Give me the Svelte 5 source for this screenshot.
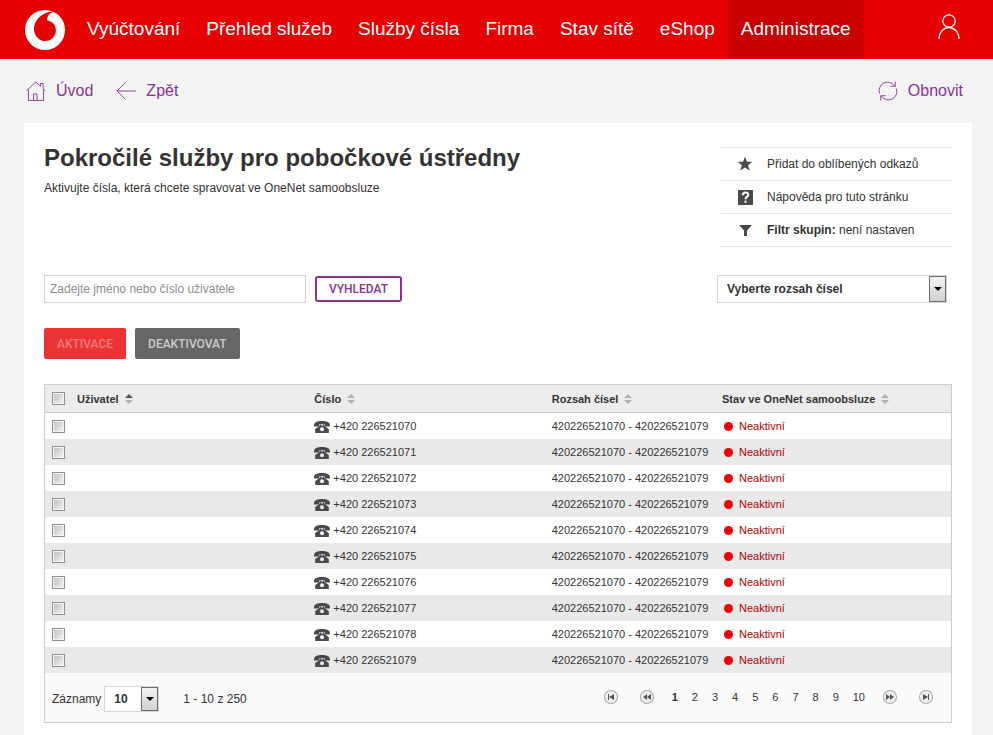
<script>
  const menu = [
    'Vyúčtování',
    'Přehled služeb',
    'Služby čísla',
    'Firma',
    'Stav sítě',
    'eShop',
    'Administrace'
  ];
  const active = 'Administrace';

  const range = '420226521070 - 420226521079';
  const pages = [1, 2, 3, 4, 5, 6, 7, 8, 9, 10];

  let search = '';
  let page = 1;
  let pageSize = '10';
  let sortBy = 'user';

  const columns = [
    { id: 'user', label: 'Uživatel' },
    { id: 'number', label: 'Číslo' },
    { id: 'range', label: 'Rozsah čísel' },
    { id: 'state', label: 'Stav ve OneNet samoobsluze' }
  ];

  let rows = Array.from({ length: 10 }, (_, i) => ({
    number: `+420 22652107${i}`,
    range,
    state: 'Neaktivní',
    checked: false
  }));

  $: allChecked = rows.every((r) => r.checked);

  function toggleAll() {
    const value = !allChecked;
    rows = rows.map((r) => ({ ...r, checked: value }));
  }
</script>

<header>
  <a class="logo" href="/" aria-label="Vodafone">
    <svg viewBox="0 0 24 24" width="40" height="40">
      <path fill="#fff" d="M12 0A12 12 0 0 0 0 12A12 12 0 0 0 12 24A12 12 0 0 0 24 12A12 12 0 0 0 12 0M16.25 1.12C16.57 1.12 16.9 1.15 17.11 1.22C14.94 1.67 13.21 3.69 13.22 6C13.22 6.05 13.22 6.11 13.23 6.17C16.87 7.06 18.5 9.25 18.5 12.28C18.54 15.31 16.14 18.64 12.09 18.65C8.82 18.66 5.41 15.86 5.39 11.37C5.38 8.4 7 5.54 9.04 3.85C11.04 2.19 13.77 1.13 16.25 1.12Z" />
    </svg>
  </a>
  <nav>
    {#each menu as item}
      <a href="/" class:active={item === active}>{item}</a>
    {/each}
  </nav>
  <button class="account" aria-label="Uživatel">
    <svg viewBox="0 0 22 26" width="22" height="26" fill="none" stroke="#fff" stroke-width="1.3">
      <circle cx="11" cy="7" r="6.2" />
      <path d="M1 25c0-6.500 4.300-11.500 10-11.500S21 18.500 21 25" />
    </svg>
  </button>
</header>

<div class="crumbs">
  <a href="/">
    <svg viewBox="0 0 20 20" width="20" height="20">
      <path d="M.7 9.800L9.700.8l4.800 4.500V2.500h2.600v5.300l2.300 2M2.500 8.500v11h15V8.500M7.500 19.500v-6.500h3.500v6.500" />
    </svg>
    Úvod
  </a>
  <a href="/">
    <svg viewBox="0 0 20 20" width="20" height="20">
      <path d="M20 10H1M9.500 1.500L1 10l8.500 8.500" />
    </svg>
    Zpět
  </a>
  <a class="refresh" href="/">
    <svg viewBox="0 0 20 20" width="20" height="20">
      <path d="M1.700 12.500A8.400 8.400 0 0 1 16.500 4.800M17.300.5v4.800h-5M18.300 7.500A8.400 8.400 0 0 1 3.500 15.200M2.700 19.500v-4.800h5" />
    </svg>
    Obnovit
  </a>
</div>

<main>
  <div class="head">
    <div>
      <h1>Pokročilé služby pro pobočkové ústředny</h1>
      <p>Aktivujte čísla, která chcete spravovat ve OneNet samoobsluze</p>
    </div>
    <ul class="tools">
      <li>
        <a href="/">
          <svg viewBox="0 0 16 16" width="16" height="16">
            <path d="M8 .8l2 5h5.300l-4.200 3.400 1.600 5.300L8 11.400l-4.700 3.100 1.600-5.300L.7 5.800H6z" />
          </svg>
          Přidat do oblíbených odkazů
        </a>
      </li>
      <li>
        <a href="/">
          <svg viewBox="0 0 16 16" width="16" height="16">
            <path d="M1 1h15v15H1z" />
            <path class="mark" d="M5.800 6.200c0-1.700 1.100-2.600 2.700-2.600s2.700.9 2.700 2.300c0 1.900-2.700 2-2.700 4.300M8.500 11.700v2" />
          </svg>
          Nápověda pro tuto stránku
        </a>
      </li>
      <li>
        <a href="/">
          <svg viewBox="0 0 16 16" width="16" height="16">
            <path d="M2 3h13l-5 5.500V14H7V8.500z" />
          </svg>
          <span><b>Filtr skupin:</b> není nastaven</span>
        </a>
      </li>
    </ul>
  </div>

  <div class="filters">
    <input
      class="search"
      type="text"
      aria-label="Jméno nebo číslo uživatele"
      placeholder="Zadejte jméno nebo číslo uživatele"
      bind:value={search}
    />
    <button class="btn outline">VYHLEDAT</button>
    <div class="select ranges">
      <select aria-label="Rozsah čísel">
        <option>Vyberte rozsah čísel</option>
        <option>{range}</option>
      </select>
      <span class="arrow"></span>
    </div>
  </div>

  <div class="actions">
    <button class="btn red" disabled>AKTIVACE</button>
    <button class="btn grey">DEAKTIVOVAT</button>
  </div>

  <div class="grid">
    <table>
      <thead>
        <tr>
          <th class="check">
            <input type="checkbox" aria-label="Vybrat vše" checked={allChecked} on:change={toggleAll} />
          </th>
          {#each columns as col}
            <th class="col-{col.id}">
              <button class="sort" on:click={() => (sortBy = col.id)}>
                {col.label}
                <svg viewBox="0 0 8 10" width="8" height="10">
                  <path class:on={sortBy === col.id} d="M4 0l4 4H0z" />
                  <path d="M4 10l4-4H0z" />
                </svg>
              </button>
            </th>
          {/each}
        </tr>
      </thead>
      <tbody>
        {#each rows as row}
          <tr>
            <td class="check">
              <input type="checkbox" aria-label={row.number} bind:checked={row.checked} />
            </td>
            <td></td>
            <td>
              <div class="cell phone">
                <svg viewBox="0 0 16 12" width="16" height="12">
                  <path d="M0 4.200C0 1.200 3.500 0 8 0s8 1.200 8 4.200v1.300h-5V3.300H5v2.200H0z" />
                  <path fill-rule="evenodd" d="M5.500 3.500h1.500v1h2v-1h1.500v1.500L14.800 8v4H1.200V8L5.500 5zM8 6.200a2 2 0 1 0 0 4 2 2 0 0 0 0-4z" />
                </svg>
                {row.number}
              </div>
            </td>
            <td>{row.range}</td>
            <td>
              <div class="cell state"><i class="dot"></i>{row.state}</div>
            </td>
          </tr>
        {/each}
      </tbody>
    </table>

    <div class="footer">
      <label for="page-size">Záznamy</label>
      <div class="select size">
        <select id="page-size" bind:value={pageSize}>
          <option>10</option>
          <option>25</option>
          <option>50</option>
        </select>
        <span class="arrow"></span>
      </div>
      <span class="total">1 - 10 z 250</span>

      <div class="pager">
        <button aria-label="První" on:click={() => (page = 1)}>
          <svg viewBox="0 0 14 14" width="14" height="14">
            <path d="M4 4h1v6H4zM10 4v6L5 7z" />
          </svg>
        </button>
        <button aria-label="Předchozí" on:click={() => (page = Math.max(1, page - 1))}>
          <svg viewBox="0 0 14 14" width="14" height="14">
            <path d="M7 4v6L3 7zM11 4v6L7 7z" />
          </svg>
        </button>
        {#each pages as n}
          <a href="#{n}" class:current={n === page} on:click|preventDefault={() => (page = n)}>{n}</a>
        {/each}
        <button aria-label="Další" on:click={() => (page = Math.min(10, page + 1))}>
          <svg viewBox="0 0 14 14" width="14" height="14">
            <path d="M3 4v6l4-3zM7 4v6l4-3z" />
          </svg>
        </button>
        <button aria-label="Poslední" on:click={() => (page = 10)}>
          <svg viewBox="0 0 14 14" width="14" height="14">
            <path d="M4 4v6l5-3zM9 4h1v6H9z" />
          </svg>
        </button>
      </div>
    </div>
  </div>
</main>

<style>
  :global(body) {
    margin: 0;
    background: #f3f3f3;
    color: #333;
    font-family: Arial, 'Liberation Sans', sans-serif;
    font-size: 12px;
  }

  a {
    color: inherit;
    text-decoration: none;
  }

  button,
  input,
  select {
    box-sizing: border-box;
    margin: 0;
    font-family: inherit;
    font-size: 12px;
    color: inherit;
  }

  button {
    padding: 0;
    border: none;
    background: none;
    cursor: pointer;
  }

  svg {
    display: block;
    flex: none;
  }

  header {
    display: flex;
    align-items: center;
    height: 59px;
    padding: 0 33px 0 25px;
    background: #e60000;
    color: #fff;
  }

  nav {
    display: flex;
    flex: 1;
    margin-left: 9px;
  }

  nav a {
    padding: 0 13px 2px;
    font-size: 19px;
    line-height: 57px;
    white-space: nowrap;
  }

  nav a.active {
    background: #cb0000;
  }

  .account {
    margin-bottom: 6px;
  }

  .crumbs {
    display: flex;
    align-items: center;
    gap: 23px;
    height: 64px;
    padding: 0 30px 0 26px;
    color: #8a3391;
    font-size: 16px;
  }

  .crumbs a {
    display: flex;
    align-items: center;
    gap: 10px;
  }

  .crumbs .refresh {
    margin-left: auto;
  }

  .crumbs path {
    fill: none;
    stroke: #8a3391;
    stroke-width: 0.9;
  }

  main {
    margin: 0 21px 0 24px;
    padding: 20px 20px 24px;
    background: #fff;
  }

  .head {
    display: flex;
    justify-content: space-between;
  }

  h1 {
    margin: 0;
    font-size: 24px;
    line-height: 30px;
  }

  p {
    margin: 7px 0 0;
    line-height: 16px;
  }

  .tools {
    width: 231px;
    margin: 4px 0 0;
    padding: 0;
    border-top: 1px solid #e6e6e6;
    list-style: none;
  }

  .tools li {
    border-bottom: 1px solid #e6e6e6;
  }

  .tools a {
    display: flex;
    align-items: center;
    gap: 14px;
    height: 32px;
    padding-left: 16px;
  }

  .tools path {
    fill: #4a4a4a;
  }

  .tools .mark {
    fill: none;
    stroke: #fff;
    stroke-width: 2;
  }

  .filters {
    display: flex;
    align-items: center;
    gap: 9px;
    margin-top: 28px;
    padding-right: 5px;
  }

  .search {
    width: 262px;
    height: 28px;
    padding: 0 5px;
    border: 1px solid #d5cfd8;
    background: #fff;
  }

  .search::placeholder {
    color: #8c8c8c;
    opacity: 1;
  }

  .btn {
    height: 31px;
    padding: 0 13px;
    border-radius: 2px;
    font-family: Roboto, sans-serif;
    font-weight: 500;
  }

  .outline {
    height: 26px;
    padding: 0 12px;
    border: 2px solid #8a3391;
    border-radius: 3px;
    color: #8a3391;
  }

  .red {
    background: #eb3333;
    color: #f47c7c;
  }

  .grey {
    background: #666;
    color: #ccc;
  }

  .select {
    position: relative;
  }

  select {
    width: 100%;
    height: 100%;
    padding: 0 20px 0 9px;
    border: 1px solid #d6d6d6;
    border-radius: 0;
    background: #fff;
    font-weight: bold;
    appearance: none;
  }

  .arrow {
    position: absolute;
    top: 1px;
    right: 1px;
    bottom: 1px;
    display: flex;
    align-items: center;
    justify-content: center;
    width: 15px;
    border: 1px solid #6c6c6c;
    background: linear-gradient(#f4f4f4, #cfcfcf);
    pointer-events: none;
  }

  .arrow::before {
    content: '';
    border: 4px solid transparent;
    border-top-color: #000;
    border-bottom: none;
  }

  .ranges {
    width: 230px;
    height: 28px;
    margin-left: auto;
  }

  .actions {
    display: flex;
    gap: 9px;
    margin: 25px 0;
  }

  .grid {
    border: 1px solid #ccc;
    background: #fafafa;
  }

  table {
    width: 100%;
    border-collapse: separate;
    border-spacing: 0;
    table-layout: fixed;
    font-size: 11px;
  }

  th,
  td {
    height: 26px;
    padding: 0;
    text-align: left;
  }

  thead tr {
    background: #ececec;
  }

  th {
    height: 27px;
    border-bottom: 1px solid #ccc;
  }

  .check {
    width: 25px;
    padding-left: 7px;
  }

  .col-user,
  .col-number {
    width: 26.2%;
  }

  .col-range {
    width: 18.8%;
  }

  .sort {
    display: flex;
    align-items: center;
    gap: 6px;
    font-size: 11px;
    font-weight: bold;
  }

  .sort path {
    fill: #b0b0b0;
  }

  .sort path.on {
    fill: #555;
  }

  tbody tr {
    background: #fff;
  }

  tbody tr:nth-child(even) {
    background: #e9e9e9;
  }

  input[type='checkbox'] {
    display: block;
    width: 13px;
    height: 13px;
    border: 1px solid #8e8f8f;
    background: linear-gradient(135deg, #bcbcbc, #f6f6f6);
    box-shadow: inset 0 0 0 1px #f4f4f4;
    appearance: none;
  }

  input[type='checkbox']:checked {
    background: #555;
  }

  .cell {
    display: flex;
    align-items: center;
  }

  .phone {
    gap: 3px;
  }

  .phone svg {
    margin-top: 2px;
    fill: #4a4a4a;
  }

  .state {
    gap: 6px;
    padding-left: 2px;
    color: #b50000;
  }

  .dot {
    width: 9px;
    height: 9px;
    border-radius: 50%;
    background: #f00000;
  }

  .footer {
    display: flex;
    align-items: center;
    padding: 13px 7px 10px;
  }

  .size {
    width: 55px;
    height: 26px;
    margin-left: 3px;
  }

  .total {
    margin-left: 24px;
  }

  .pager {
    display: flex;
    align-items: center;
    align-self: flex-start;
    margin-left: auto;
    font-size: 11px;
    line-height: 22px;
  }

  .pager a {
    padding: 0 7px;
  }

  .pager a.current {
    font-weight: bold;
  }

  .pager button {
    padding: 0 11px;
  }

  .pager svg {
    border-radius: 50%;
    background: #f0f0f0;
    box-shadow: inset 0 0 0 1px #aaa;
    fill: #555;
  }
</style>
